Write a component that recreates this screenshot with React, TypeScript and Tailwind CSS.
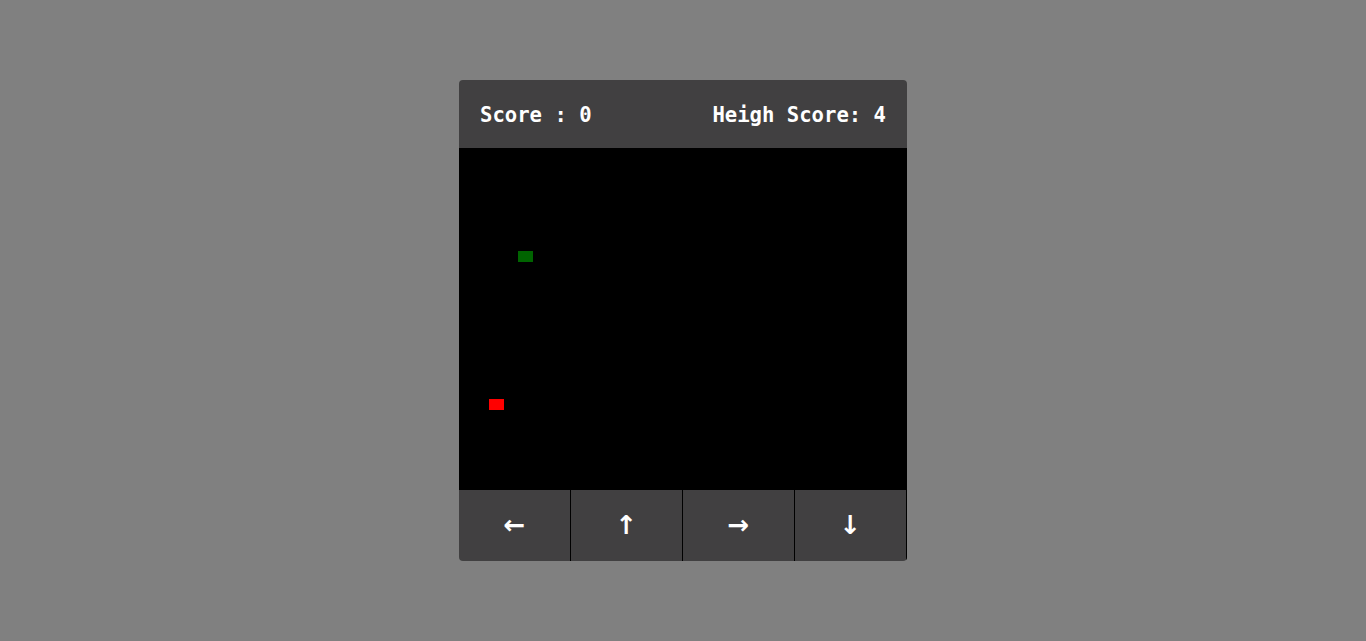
export default function App() {
  const arrows = ['←', '↑', '→', '↓'];
  return (
    <div className="min-h-screen bg-[#808080] flex justify-center pt-20">
      <div className="w-[448px] h-[481px] rounded overflow-hidden flex flex-col bg-[#414041]">
        {/* header */}
        <div
          className="h-[68px] flex items-center justify-between px-[21px] pt-[2px] text-white text-[20.6px] font-semibold"
          style={{ fontFamily: '"DejaVu Sans Mono", "Liberation Mono", monospace' }}
        >
          <span>Score : 0</span>
          <span>Heigh Score: 4</span>
        </div>
        {/* board */}
        <div className="relative h-[342px] bg-black">
          <div className="absolute left-[59px] top-[103px] w-[15px] h-[11px] bg-[#006400]" />
          <div className="absolute left-[30px] top-[251px] w-[15px] h-[11px] bg-[#ff0000]" />
        </div>
        {/* controls */}
        <div className="flex h-[71px]">
          {arrows.map((a) => (
            <button
              key={a}
              className="w-[112px] border-r border-black flex items-center justify-center text-white text-[26px] font-semibold"
              style={{ fontFamily: '"DejaVu Sans", sans-serif' }}
            >
              {a}
            </button>
          ))}
        </div>
      </div>
    </div>
  );
}
